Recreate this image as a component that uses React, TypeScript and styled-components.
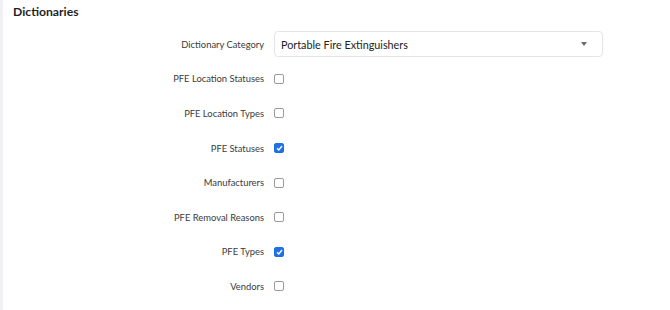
import React from 'react';
import styled, { createGlobalStyle } from 'styled-components';

const GlobalStyle = createGlobalStyle`
  html, body {
    margin: 0;
    padding: 0;
    background: #ffffff;
    font-family: Lato, "Liberation Sans", sans-serif;
  }
`;

const Page = styled.div`
  width: 670px;
  height: 310px;
  box-sizing: border-box;
  border-left: 3px solid #f0f0f5;
  overflow: hidden;
`;

const Title = styled.h2`
  margin: 0;
  padding: 4px 0 0 10px;
  font-size: 12.2px;
  font-weight: 700;
  color: #1f1f1f;
  line-height: 16px;
`;

const Form = styled.div`
  display: grid;
  grid-template-columns: 261px 329px;
  grid-auto-rows: 34.6px;
  column-gap: 10px;
  align-items: center;
  margin-top: 7px;
`;

const Label = styled.label`
  text-align: right;
  font-size: 9.4px;
  color: #3a3a3a;
`;

const Select = styled.div`
  height: 26px;
  box-sizing: border-box;
  border: 1px solid #e6e6e6;
  border-radius: 4px;
  display: flex;
  align-items: center;
  justify-content: space-between;
  padding: 0 15px 0 6px;
  font-size: 10.8px;
  color: #222;
`;

const Caret = styled.span`
  width: 0;
  height: 0;
  border-left: 3px solid transparent;
  border-right: 3px solid transparent;
  border-top: 4px solid #6b6b6b;
`;

const Box = styled.span<{ $checked?: boolean }>`
  width: 10px;
  height: 10px;
  box-sizing: border-box;
  border-radius: 2px;
  border: 1px solid ${(p) => (p.$checked ? '#1f6fe5' : '#9a9a9a')};
  background: ${(p) => (p.$checked ? '#1f6fe5' : '#fff')};
  display: flex;
  align-items: center;
  justify-content: center;
`;

const items: { label: string; checked: boolean }[] = [
  { label: 'PFE Location Statuses', checked: false },
  { label: 'PFE Location Types', checked: false },
  { label: 'PFE Statuses', checked: true },
  { label: 'Manufacturers', checked: false },
  { label: 'PFE Removal Reasons', checked: false },
  { label: 'PFE Types', checked: true },
  { label: 'Vendors', checked: false },
];

const App: React.FC = () => (
  <Page>
    <GlobalStyle />
    <Title>Dictionaries</Title>
    <Form>
      <Label>Dictionary Category</Label>
      <Select>
        <span>Portable Fire Extinguishers</span>
        <Caret />
      </Select>
      {items.map((it) => (
        <React.Fragment key={it.label}>
          <Label>{it.label}</Label>
          <div>
            <Box $checked={it.checked}>
              {it.checked && (
                <svg width="7" height="6" viewBox="0 0 7 6">
                  <path d="M1 3.2 L2.8 5 L6 1" fill="none" stroke="#fff" strokeWidth="1.4" />
                </svg>
              )}
            </Box>
          </div>
        </React.Fragment>
      ))}
    </Form>
  </Page>
);

export default App;
